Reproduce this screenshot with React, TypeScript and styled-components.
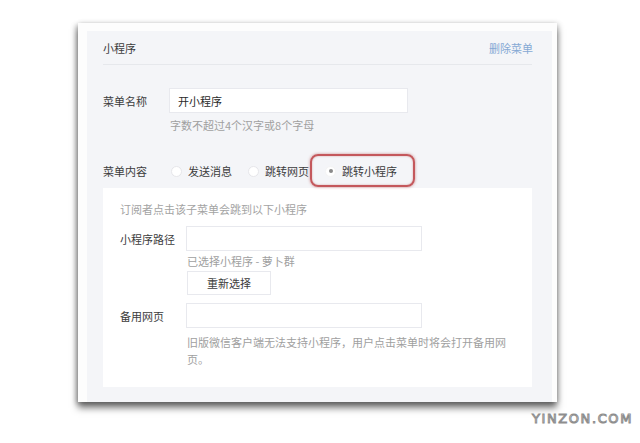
import React from "react";
import styled, { createGlobalStyle } from "styled-components";

const Global = createGlobalStyle`
  html, body { margin: 0; padding: 0; background: #ffffff; }
  body { font-family: "Noto Sans CJK SC", "Noto Sans", sans-serif; }
`;

const Page = styled.div`
  width: 640px;
  height: 443px;
  display: flex;
  flex-direction: column;
  padding: 23px 0 0 78px;
  box-sizing: border-box;
  overflow: hidden;
`;

const Frame = styled.div`
  width: 479px;
  box-sizing: border-box;
  padding: 8px 5px 0 9px;
  background: #fdfdfd;
  box-shadow: 0 6px 7px rgba(0, 0, 0, 0.5), -2px 2px 5px rgba(0, 0, 0, 0.25),
    2px 0 5px rgba(0, 0, 0, 0.12);
`;

const Panel = styled.div`
  background: #f4f5f8;
  padding: 0 20px 15px 16px;
  display: flex;
  flex-direction: column;
`;

const Header = styled.div`
  height: 33px;
  border-bottom: 1px solid #e6e8ec;
  display: flex;
  align-items: center;
  justify-content: space-between;
  font-size: 11px;
  color: #3c3c3c;
`;

const LinkText = styled.span`
  color: #86a9d4;
  margin-right: -1px;
`;

const Row = styled.div<{ $top: number }>`
  display: flex;
  align-items: center;
  margin-top: ${(p) => p.$top}px;
`;

const Label = styled.div`
  width: 66px;
  flex: none;
  font-size: 11px;
  line-height: 16px;
  color: #3c3c3c;
`;

const Input = styled.div<{ $w: number }>`
  width: ${(p) => p.$w}px;
  height: 25px;
  box-sizing: border-box;
  background: #ffffff;
  border: 1px solid #e8e9ee;
  display: flex;
  align-items: center;
  padding-left: 8px;
  font-size: 11px;
  color: #2a2a2a;
`;

const Hint = styled.div<{ $top: number; $w?: number }>`
  margin-top: ${(p) => p.$top}px;
  margin-left: 67px;
  font-size: 11px;
  line-height: 17px;
  color: #a0a0a0;
  ${(p) => (p.$w ? `width: ${p.$w}px;` : "")}
`;

const Options = styled.div`
  display: flex;
  align-items: center;
  margin-left: 2px;
`;

const Option = styled.div<{ $marked?: boolean }>`
  position: relative;
  display: flex;
  align-items: center;
  gap: 6px;
  margin-right: 16px;
  font-size: 11px;
  line-height: 18px;
  color: #3c3c3c;
  ${(p) =>
    p.$marked
      ? `
    &::after {
      content: "";
      position: absolute;
      left: -15px;
      top: -8px;
      width: 101px;
      height: 29px;
      border: 2.5px solid #c4585c;
      border-radius: 8px;
      box-shadow: 0 0 3px rgba(170, 50, 50, 0.55), inset 0 0 2px rgba(170, 50, 50, 0.45);
    }
  `
      : ""}
`;

const Radio = styled.span<{ $on?: boolean }>`
  width: 11px;
  height: 11px;
  box-sizing: border-box;
  border-radius: 50%;
  background: #ffffff;
  border: 1px solid ${(p) => (p.$on ? "#f4f4f4" : "#e6e6ea")};
  display: flex;
  align-items: center;
  justify-content: center;
  &::before {
    content: "";
    width: 4px;
    height: 4px;
    border-radius: 50%;
    background: ${(p) => (p.$on ? "#8a8a8a" : "transparent")};
  }
`;

const SubBox = styled.div`
  margin-top: 8px;
  background: #ffffff;
  padding: 13px 17px 19px 17px;
  display: flex;
  flex-direction: column;
`;

const Desc = styled.div`
  font-size: 11px;
  line-height: 16px;
  color: #a3a3a3;
`;

const Button = styled.div`
  margin-top: 1px;
  margin-left: 67px;
  width: 84px;
  height: 24px;
  box-sizing: border-box;
  border: 1px solid #e8e9ee;
  background: #ffffff;
  display: flex;
  align-items: center;
  justify-content: center;
  font-size: 11px;
  color: #3c3c3c;
`;

const Watermark = styled.div`
  align-self: flex-end;
  margin-top: 9px;
  margin-right: 7px;
  font-family: "DejaVu Sans", sans-serif;
  font-size: 13px;
  letter-spacing: 1.6px;
  line-height: 16px;
  color: #ffffff;
  -webkit-text-stroke: 1px #8e8e8e;
`;

export default function App() {
  return (
    <>
      <Global />
      <Page>
        <Frame>
          <Panel>
            <Header>
              <span>小程序</span>
              <LinkText>删除菜单</LinkText>
            </Header>
            <Row $top={23}>
              <Label>菜单名称</Label>
              <Input $w={239}>开小程序</Input>
            </Row>
            <Hint $top={4}>字数不超过4个汉字或8个字母</Hint>
            <Row $top={28}>
              <Label>菜单内容</Label>
              <Options>
                <Option>
                  <Radio />
                  发送消息
                </Option>
                <Option>
                  <Radio />
                  跳转网页
                </Option>
                <Option $marked>
                  <Radio $on />
                  跳转小程序
                </Option>
              </Options>
            </Row>
            <SubBox>
              <Desc>订阅者点击该子菜单会跳到以下小程序</Desc>
              <Row $top={9}>
                <Label>小程序路径</Label>
                <Input $w={236} />
              </Row>
              <Hint $top={2}>已选择小程序 - 萝卜群</Hint>
              <Button>重新选择</Button>
              <Row $top={8}>
                <Label>备用网页</Label>
                <Input $w={236} />
              </Row>
              <Hint $top={6} $w={326}>
                旧版微信客户端无法支持小程序，用户点击菜单时将会打开备用网页。
              </Hint>
            </SubBox>
          </Panel>
        </Frame>
        <Watermark>YINZON.COM</Watermark>
      </Page>
    </>
  );
}
